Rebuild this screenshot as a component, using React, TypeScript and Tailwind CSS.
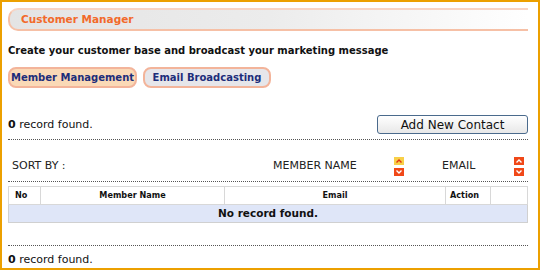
const SortArrows = ({ activeUp }: { activeUp?: boolean }) => (
  <div className="flex flex-col gap-[3px]">
    <svg width="10" height="8" viewBox="0 0 10 8">
      <rect width="10" height="8" fill={activeUp ? '#f8d048' : '#f04818'} />
      <path d="M2.5 5.5 L5 3 L7.5 5.5" stroke={activeUp ? '#e03010' : '#ffffff'} strokeWidth="1.4" fill="none" />
    </svg>
    <svg width="10" height="8" viewBox="0 0 10 8">
      <rect width="10" height="8" fill="#f04818" />
      <path d="M2.5 2.5 L5 5 L7.5 2.5" stroke="#ffffff" strokeWidth="1.4" fill="none" />
    </svg>
  </div>
);

const Dotted = () => <div className="border-b border-dotted border-[#555555]" />;

const App = () => {
  return (
    <div
      className="w-[540px] h-[270px] border-2 border-[#eca000] bg-white overflow-hidden"
      style={{ fontFamily: 'Verdana, "DejaVu Sans", sans-serif' }}
    >
      <div className="px-[6px] pt-[6px]">
        <div className="h-[23px] mr-[4px] flex items-center pl-[11px] rounded-l-[10px] border-l-2 border-y-2 border-[#f6c0a6] border-t-[#f8d4c4] bg-gradient-to-r from-[#e4e4e4] via-[#ececec] to-white">
          <span className="text-[10.5px] font-bold text-[#f26a2a]">Customer Manager</span>
        </div>

        <div className="mt-[12px] text-[10px] font-bold text-[#111111]">
          Create your customer base and broadcast your marketing message
        </div>

        <div className="mt-[9px] flex gap-[6px]">
          <button className="h-[21px] w-[129px] rounded-[8px] border-2 border-[#f3b49a] bg-[#fad9b6] text-[10px] font-bold text-[#1d2d7a]">
            Member Management
          </button>
          <button className="h-[21px] w-[128px] rounded-[8px] border-2 border-[#f3b49a] bg-[#e6e6ea] text-[10px] font-bold text-[#1d2d7a]">
            Email Broadcasting
          </button>
        </div>

        <div className="mt-[27px] flex items-center justify-between pr-[4px]">
          <div className="text-[11px] text-[#111111] pt-[2px]">
            <span className="font-bold">0</span> record found.
          </div>
          <button className="w-[151px] h-[19px] rounded-[3px] border border-[#4a6a8c] bg-gradient-to-b from-white to-[#e8e8e8] text-[12px] text-[#111111] leading-none">
            Add New Contact
          </button>
        </div>
        <div className="mt-[5px] mr-[4px]">
          <Dotted />
        </div>

        <div className="mt-[17px] mr-[4px] flex items-center text-[11px] text-[#222222]">
          <span className="pl-[4px] w-[265px]">SORT BY :</span>
          <span className="w-[121px]">MEMBER NAME</span>
          <SortArrows activeUp />
          <span className="ml-[38px] w-[72px]">EMAIL</span>
          <SortArrows />
        </div>
        <div className="mt-[5px] mr-[4px]">
          <Dotted />
        </div>

        <table
          className="mt-[4px] w-[520px] border-collapse border border-[#d0d0d0] text-[9px]"
          style={{ fontFamily: 'Tahoma, "DejaVu Sans Condensed", "DejaVu Sans", sans-serif', fontStretch: 'condensed' }}
        >
          <thead>
            <tr className="h-[18px] text-[#111111]">
              <th className="w-[32px] border border-[#d8d8d8] text-left pl-[6px] font-bold">No</th>
              <th className="w-[184px] border border-[#d8d8d8] font-bold">Member Name</th>
              <th className="w-[221px] border border-[#d8d8d8] font-bold">Email</th>
              <th className="w-[45px] border border-[#d8d8d8] text-left pl-[4px] font-bold">Action</th>
              <th className="border border-[#d8d8d8]"></th>
            </tr>
          </thead>
          <tbody>
            <tr className="h-[18px] bg-[#dfe6f8]">
              <td
                colSpan={5}
                className="text-center text-[10.5px] font-bold text-[#111111]"
                style={{ fontFamily: 'Verdana, "DejaVu Sans", sans-serif', fontStretch: 'normal' }}
              >
                No record found.
              </td>
            </tr>
          </tbody>
        </table>

        <div className="mt-[22px] mr-[4px]">
          <Dotted />
        </div>
        <div className="mt-[6px] text-[11px] text-[#111111]">
          <span className="font-bold">0</span> record found.
        </div>
      </div>
    </div>
  );
};

export default App;
